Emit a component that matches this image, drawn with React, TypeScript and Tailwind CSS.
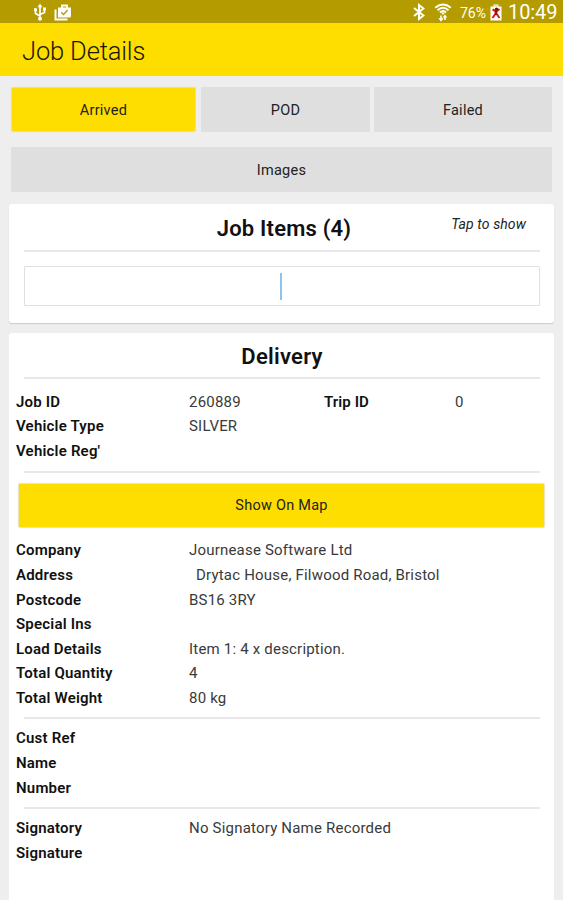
import type { ReactNode } from "react";

interface Field {
  label: string;
  value?: string;
  indent?: boolean;
}

const ADDRESS_FIELDS: Field[] = [
  { label: "Company", value: "Journease Software Ltd" },
  { label: "Address", value: "Drytac House, Filwood Road, Bristol", indent: true },
  { label: "Postcode", value: "BS16 3RY" },
  { label: "Special Ins" },
  { label: "Load Details", value: "Item 1: 4 x description." },
  { label: "Total Quantity", value: "4" },
  { label: "Total Weight", value: "80 kg" },
];

const CUSTOMER_FIELDS: Field[] = [{ label: "Cust Ref" }, { label: "Name" }, { label: "Number" }];

const SIGNATURE_FIELDS: Field[] = [
  { label: "Signatory", value: "No Signatory Name Recorded" },
  { label: "Signature" },
];

function UsbIcon() {
  return (
    <svg className="h-[18px] w-[14px]" viewBox="0 0 14 18" fill="none" stroke="#fff" strokeWidth="1.7">
      <path d="M7 3v12M7 13L2.500 10.500V7M7 11.500l4.500-2V6.500" />
      <path d="M7 .5L9.500 4.200h-5zM1 5.200h3v3H1zM10 4.500h3v3h-3z" fill="#fff" stroke="none" />
      <circle cx="7" cy="15.800" r="2" fill="#fff" stroke="none" />
    </svg>
  );
}

function BriefcaseIcon() {
  return (
    <svg className="h-[17px] w-[18px]" viewBox="0 0 18 17" fill="none">
      <path d="M1.500 5.500v10H13.500" stroke="#fff" strokeWidth="2" />
      <path d="M8 4V1.500h5V4" stroke="#fff" strokeWidth="1.800" />
      <path d="M4 3.500h13v8.500q0 1.500-1.500 1.500H4z" fill="#fff" />
      <path d="M7.300 8.300l2.200 2.200 4.200-4.500" stroke="#b39b00" strokeWidth="1.300" />
    </svg>
  );
}

function BluetoothIcon() {
  return (
    <svg className="h-[18px] w-[12px]" viewBox="0 0 12 18" fill="none" stroke="#fff" strokeWidth="2">
      <path d="M1 5l9.500 7.500L6 16v-14l4.500 3.500L1 13" />
    </svg>
  );
}

function WifiIcon() {
  return (
    <svg className="h-[19px] w-[18px]" viewBox="0 0 18 19" fill="none">
      <path d="M1.200 4.700Q9-1.700 16.800 4.700M3.500 7.200Q9 2.500 14.500 7.200M5.900 9.500Q9 6.500 12.100 9.500" stroke="#fff" strokeWidth="1.900" />
      <path d="M6.800 9.500h4.400L9 12z" fill="#fff" />
      <path d="M7 12.500v4M11 17v-4" stroke="#fff" strokeWidth="1.600" />
      <path d="M4.300 15.200h5.400L7 18.800zM8.700 14.500h4.600L11 11.500z" fill="#fff" />
    </svg>
  );
}

function BatteryIcon() {
  return (
    <svg className="h-[17px] w-[12px]" viewBox="0 0 12 17" fill="none">
      <path d="M.5 2.500h3V.5h5v2h3v14H.5z" fill="#fff" />
      <path d="M4 .5h4v2H4z" fill="#e4dba6" />
      <path d="M2.500 5.500l4 2M9.500 5L5 9M2.500 14l3.500-5 3.500 5" stroke="#d51c16" strokeWidth="2" />
      <circle cx="6.500" cy="5" r="1.600" fill="#4b1712" />
      <path d="M6 6v5" stroke="#8f1813" strokeWidth="2.200" />
    </svg>
  );
}

function StatusBar() {
  return (
    <header className="flex h-[23px] shrink-0 items-center bg-[#b39b00] pt-px pr-[6px] pl-[33px] text-white">
      <UsbIcon />
      <div className="ml-[7px]">
        <BriefcaseIcon />
      </div>
      <div className="ml-auto flex items-center">
        <BluetoothIcon />
        <div className="ml-[9px]">
          <WifiIcon />
        </div>
        <span className="ml-[8px] w-[29px] pt-px text-[14px] leading-none whitespace-nowrap">76%</span>
        <div className="ml-px">
          <BatteryIcon />
        </div>
        <span className="ml-[6px] w-[49px] text-[20px] leading-none tracking-[-0.1px]">10:49</span>
      </div>
    </header>
  );
}

function ActionButton({ children, className }: { children: ReactNode; className: string }) {
  return (
    <button
      type="button"
      className={`flex items-center justify-center rounded-[1px] pt-[2px] text-[14.5px] tracking-[0.25px] text-[#222] ${className}`}
    >
      {children}
    </button>
  );
}

function Divider({ className = "" }: { className?: string }) {
  return <div className={`mr-[14px] ml-[15px] h-[2px] shrink-0 bg-[#e8e8e8] ${className}`} />;
}

function FieldRow({ label, value, indent }: Field) {
  return (
    <div className="flex h-[24.6px] items-center pt-px pl-[7px] text-[15px] tracking-[0.2px]">
      <span className="w-[173px] font-semibold text-[#111]">{label}</span>
      <span className={`whitespace-nowrap text-[#3a3a3a] ${indent ? "pl-[7px]" : ""}`}>{value}</span>
    </div>
  );
}

export default function App() {
  return (
    <div className="flex h-[900px] w-[563px] flex-col overflow-hidden bg-[#eee] font-['Roboto',sans-serif]">
      <StatusBar />
      <div className="flex h-[53px] shrink-0 items-center bg-[#fedd00] pt-[3px] pl-[22px]">
        <h1 className="text-[25.5px] font-light tracking-[-0.15px] text-[#1a1700]">Job Details</h1>
      </div>

      {/* Actions */}
      <div className="mt-[11px] flex h-[45px] shrink-0 items-center px-[11px]">
        <ActionButton className="ml-px h-[43px] w-[183px] bg-[#fedd00] shadow-[0_0_1px_1px_#e3dcb0]">Arrived</ActionButton>
        <ActionButton className="ml-[6px] h-[45px] w-[169px] bg-[#dfdfdf]">POD</ActionButton>
        <ActionButton className="ml-[4px] h-[45px] w-[178px] bg-[#dfdfdf]">Failed</ActionButton>
      </div>
      <ActionButton className="mx-[11px] mt-[15px] h-[45px] shrink-0 bg-[#dfdfdf]">Images</ActionButton>

      {/* Job items */}
      <section className="relative mx-[9px] mt-[12px] flex h-[119px] shrink-0 flex-col rounded-[3px] bg-white shadow-[0_1px_1px_#ccc]">
        <h2 className="flex h-[46px] items-center justify-center pt-[2px] pl-[5px] text-[22px] font-semibold tracking-[0.2px] text-[#111]">
          Job Items (4)
        </h2>
        <span className="absolute top-[10px] right-[28px] text-[14px] leading-5 tracking-[0.1px] text-[#222] italic">
          Tap to show
        </span>
        <Divider />
        <div className="mr-[14px] ml-[15px] mt-[14px] flex h-[40px] items-center justify-center rounded-[1px] border border-[#e0e0e0] pr-[2px]">
          <div className="h-[27px] w-[2px] bg-[#8dc3ec]" />
        </div>
      </section>

      {/* Delivery */}
      <section className="mx-[9px] mt-[10px] flex min-h-0 flex-1 flex-col rounded-t-[3px] bg-white">
        <h2 className="flex h-[44px] shrink-0 items-center justify-center pt-[2px] pl-px text-[22px] font-semibold tracking-[0.25px] text-[#111]">
          Delivery
        </h2>
        <Divider className="mb-[10px]" />
        <div className="flex">
          <div className="w-[315px]">
            <FieldRow label="Job ID" value="260889" />
            <FieldRow label="Vehicle Type" value="SILVER" />
            <FieldRow label="Vehicle Reg'" />
          </div>
          <div className="flex h-[24.6px] items-center pt-px text-[15px] tracking-[0.1px]">
            <span className="w-[131px] font-semibold text-[#111]">Trip ID</span>
            <span className="text-[#3a3a3a]">0</span>
          </div>
        </div>
        <Divider className="mt-[8px]" />
        <ActionButton className="mx-[10px] mt-[11px] h-[43px] shrink-0 bg-[#fedd00] shadow-[0_0_1px_1px_#e9e2b5]">
          Show On Map
        </ActionButton>
        <div className="mt-[11px]">
          {ADDRESS_FIELDS.map((f) => (
            <FieldRow key={f.label} {...f} />
          ))}
        </div>
        <Divider className="my-[7px]" />
        {CUSTOMER_FIELDS.map((f) => (
          <FieldRow key={f.label} {...f} />
        ))}
        <Divider className="my-[7px]" />
        {SIGNATURE_FIELDS.map((f) => (
          <FieldRow key={f.label} {...f} />
        ))}
      </section>
    </div>
  );
}
